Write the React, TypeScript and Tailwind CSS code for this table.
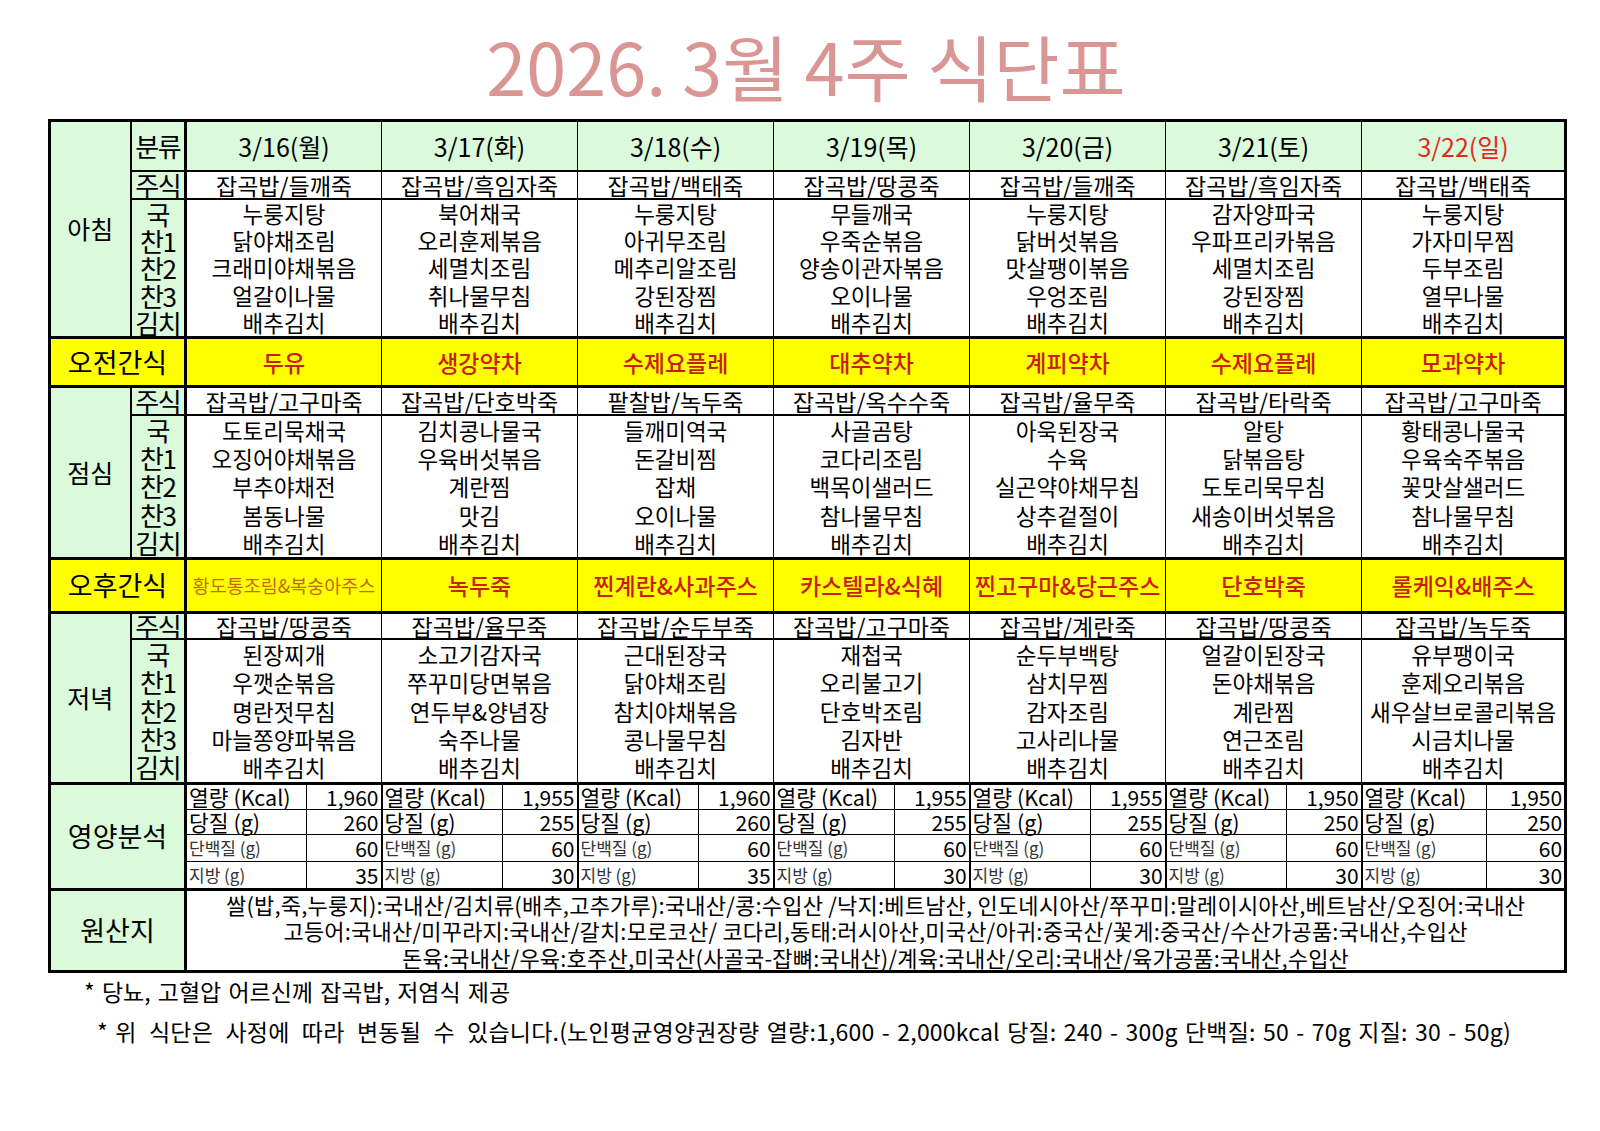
import React from "react"

const dates = ["3/16(월)", "3/17(화)", "3/18(수)", "3/19(목)", "3/20(금)", "3/21(토)", "3/22(일)"]
const sides = ["국", "찬1", "찬2", "찬3", "김치"]
const kimchi = Array(7).fill("배추김치")

interface Meal {
  name: string
  main: string[]
  dishes: string[][]
  lineClass: string
  mainClass: string
}

const breakfast: Meal = {
  name: "아침",
  main: ["잡곡밥/들깨죽", "잡곡밥/흑임자죽", "잡곡밥/백태죽", "잡곡밥/땅콩죽", "잡곡밥/들깨죽", "잡곡밥/흑임자죽", "잡곡밥/백태죽"],
  dishes: [
    ["누룽지탕", "북어채국", "누룽지탕", "무들깨국", "누룽지탕", "감자양파국", "누룽지탕"],
    ["닭야채조림", "오리훈제볶음", "아귀무조림", "우죽순볶음", "닭버섯볶음", "우파프리카볶음", "가자미무찜"],
    ["크래미야채볶음", "세멸치조림", "메추리알조림", "양송이관자볶음", "맛살팽이볶음", "세멸치조림", "두부조림"],
    ["얼갈이나물", "취나물무침", "강된장찜", "오이나물", "우엉조림", "강된장찜", "열무나물"],
    kimchi,
  ],
  lineClass: "h-[27.4px] leading-[27.4px]",
  mainClass: "h-[28px]",
}

const lunch: Meal = {
  name: "점심",
  main: ["잡곡밥/고구마죽", "잡곡밥/단호박죽", "팥찰밥/녹두죽", "잡곡밥/옥수수죽", "잡곡밥/율무죽", "잡곡밥/타락죽", "잡곡밥/고구마죽"],
  dishes: [
    ["도토리묵채국", "김치콩나물국", "들깨미역국", "사골곰탕", "아욱된장국", "알탕", "황태콩나물국"],
    ["오징어야채볶음", "우육버섯볶음", "돈갈비찜", "코다리조림", "수육", "닭볶음탕", "우육숙주볶음"],
    ["부추야채전", "계란찜", "잡채", "백목이샐러드", "실곤약야채무침", "도토리묵무침", "꽃맛살샐러드"],
    ["봄동나물", "맛김", "오이나물", "참나물무침", "상추겉절이", "새송이버섯볶음", "참나물무침"],
    kimchi,
  ],
  lineClass: "h-[28.2px] leading-[28.2px]",
  mainClass: "h-[28px]",
}

const dinner: Meal = {
  name: "저녁",
  main: ["잡곡밥/땅콩죽", "잡곡밥/율무죽", "잡곡밥/순두부죽", "잡곡밥/고구마죽", "잡곡밥/계란죽", "잡곡밥/땅콩죽", "잡곡밥/녹두죽"],
  dishes: [
    ["된장찌개", "소고기감자국", "근대된장국", "재첩국", "순두부백탕", "얼갈이된장국", "유부팽이국"],
    ["우깻순볶음", "쭈꾸미당면볶음", "닭야채조림", "오리불고기", "삼치무찜", "돈야채볶음", "훈제오리볶음"],
    ["명란젓무침", "연두부&양념장", "참치야채볶음", "단호박조림", "감자조림", "계란찜", "새우살브로콜리볶음"],
    ["마늘쫑양파볶음", "숙주나물", "콩나물무침", "김자반", "고사리나물", "연근조림", "시금치나물"],
    kimchi,
  ],
  lineClass: "h-[28.4px] leading-[28.4px]",
  mainClass: "h-[26px]",
}

const amSnack = ["두유", "생강약차", "수제요플레", "대추약차", "계피약차", "수제요플레", "모과약차"]
const pmSnack = ["황도통조림&복숭아주스", "녹두죽", "찐계란&사과주스", "카스텔라&식혜", "찐고구마&당근주스", "단호박죽", "롤케익&배주스"]

const nutrition = [
  { label: "열량 (Kcal)", small: false, values: ["1,960", "1,955", "1,960", "1,955", "1,955", "1,950", "1,950"], h: "h-[26px]" },
  { label: "당질 (g)", small: false, values: ["260", "255", "260", "255", "255", "250", "250"], h: "h-[25px]" },
  { label: "단백질 (g)", small: true, values: ["60", "60", "60", "60", "60", "60", "60"], h: "h-[27px]" },
  { label: "지방 (g)", small: true, values: ["35", "30", "35", "30", "30", "30", "30"], h: "h-[28px]" },
]

const origin = [
  "쌀(밥,죽,누룽지):국내산/김치류(배추,고추가루):국내산/콩:수입산 /낙지:베트남산, 인도네시아산/쭈꾸미:말레이시아산,베트남산/오징어:국내산",
  "고등어:국내산/미꾸라지:국내산/갈치:모로코산/ 코다리,동태:러시아산,미국산/아귀:중국산/꽃게:중국산/수산가공품:국내산,수입산",
  "돈육:국내산/우육:호주산,미국산(사골국-잡뼈:국내산)/계육:국내산/오리:국내산/육가공품:국내산,수입산",
]

const cell = "border border-black p-0 text-center align-middle"
const green = "bg-[#dbf9db]"

function MealRows({ meal, withHeader }: { meal: Meal; withHeader?: boolean }) {
  const label = (
    <td rowSpan={withHeader ? 3 : 2} className={`${cell} ${green} border-r-2 text-[25px]`}>
      {meal.name}
    </td>
  )
  return (
    <>
      {withHeader && (
        <tr className="h-[50px]">
          {label}
          <td className={`${cell} ${green} border-r-[3px] border-b-2 text-[26px] leading-[26px] tracking-[-1.5px]`}>분류</td>
          {dates.map((d, i) => (
            <td
              key={d}
              colSpan={2}
              className={`${cell} ${green} border-b-2 text-[25px] leading-[28px] ${i === 6 ? "text-[#e02b20]" : ""}`}
            >
              {d}
            </td>
          ))}
        </tr>
      )}
      <tr className={meal.mainClass}>
        {!withHeader && label}
        <td className={`${cell} ${green} border-r-[3px] border-b-2 text-[26px] leading-[24px] tracking-[-1.5px]`}>주식</td>
        {meal.main.map((m, i) => (
          <td key={i} colSpan={2} className={`${cell} border-b-2 text-[23px] leading-[24px] whitespace-nowrap`}>
            {m}
          </td>
        ))}
      </tr>
      <tr>
        <td className={`${cell} ${green} border-r-[3px] text-[26px] tracking-[-1.5px]`}>
          {sides.map((s) => (
            <div key={s} className={meal.lineClass}>
              {s}
            </div>
          ))}
        </td>
        {dates.map((d, i) => (
          <td key={d} colSpan={2} className={`${cell} text-[22.5px] whitespace-nowrap`}>
            {meal.dishes.map((row, r) => (
              <div key={r} className={meal.lineClass}>
                {row[i]}
              </div>
            ))}
          </td>
        ))}
      </tr>
    </>
  )
}

function SnackRow({ name, items, height }: { name: string; items: string[]; height: string }) {
  return (
    <tr className={height}>
      <td colSpan={2} className={`${cell} border-y-[3px] border-r-[3px] bg-[#ffff00] text-[27px] leading-[28px]`}>
        {name}
      </td>
      {items.map((s, i) => (
        <td
          key={i}
          colSpan={2}
          className={`${cell} border-y-[3px] bg-[#ffff00] whitespace-nowrap leading-[26px] ${
            s.length > 10 ? "text-[18.5px] text-[#c46a12]" : "text-[23px] font-medium text-[#c81e0a]"
          }`}
        >
          {s}
        </td>
      ))}
    </tr>
  )
}

export default function App() {
  return (
    <div className="w-[1600px] h-[1131px] bg-white font-['Noto_Sans_CJK_KR','Noto_Sans',sans-serif] text-black">
      <div className="px-[48px]">
        <h1 className="w-[1516px] pt-[25px] h-[107px] mb-[12px] text-center text-[72px] leading-[80px] font-normal text-[#da9694]">
          2026. 3월 4주 식단표
        </h1>

        <table className="w-[1516px] table-fixed border-collapse border-[3px] border-black">
          <colgroup>
            <col className="w-[81px]" />
            <col className="w-[55px]" />
            {dates.map((d, i) => (
              <React.Fragment key={d}>
                <col className={i === 6 ? "w-[125px]" : "w-[121px]"} />
                <col className={i === 6 ? "w-[79px]" : "w-[75px]"} />
              </React.Fragment>
            ))}
          </colgroup>
          <tbody>
            <MealRows meal={breakfast} withHeader />
            <SnackRow name="오전간식" items={amSnack} height="h-[49px]" />
            <MealRows meal={lunch} />
            <SnackRow name="오후간식" items={pmSnack} height="h-[54px]" />
            <MealRows meal={dinner} />

            {nutrition.map((n, r) => (
              <tr key={n.label} className={n.h}>
                {r === 0 && (
                  <td rowSpan={4} colSpan={2} className={`${cell} ${green} border-t-[3px] border-r-[3px] text-[27px]`}>
                    영양분석
                  </td>
                )}
                {n.values.map((v, i) => (
                  <React.Fragment key={i}>
                    <td
                      className={`border border-black border-l-2 p-0 pl-[2px] text-left align-middle whitespace-nowrap ${
                        r === 0 ? "border-t-[3px]" : ""
                      } ${n.small ? "text-[17px] text-[#333]" : "text-[21.5px]"} leading-[22px]`}
                    >
                      {n.label}
                    </td>
                    <td
                      className={`border border-black p-0 pr-[2px] text-right align-middle text-[21px] leading-[22px] ${
                        r === 0 ? "border-t-[3px]" : ""
                      }`}
                    >
                      {v}
                    </td>
                  </React.Fragment>
                ))}
              </tr>
            ))}

            <tr className="h-[82px]">
              <td colSpan={2} className={`${cell} ${green} border-t-[3px] border-r-[3px] text-[27px]`}>
                원산지
              </td>
              <td colSpan={14} className={`${cell} border-t-[3px] text-[22px] leading-[26.5px] tracking-[0.2px]`}>
                {origin.map((line) => (
                  <div key={line} className="whitespace-nowrap">
                    {line}
                  </div>
                ))}
              </td>
            </tr>
          </tbody>
        </table>

        <p className="mt-[3px] pl-[36px] text-[23px] leading-[30px] [word-spacing:2px]">* 당뇨, 고혈압 어르신께 잡곡밥, 저염식 제공</p>
        <p className="mt-[10px] pl-[49px] text-[23px] leading-[30px] whitespace-nowrap tracking-[0.2px] [word-spacing:2px]">
          * <span className="[word-spacing:7px]">위 식단은 사정에 따라 변동될 수 있습니다.</span>(노인평균영양권장량 열량:1,600 - 2,000kcal
          당질: 240 - 300g 단백질: 50 - 70g 지질: 30 - 50g)
        </p>
      </div>
    </div>
  )
}
